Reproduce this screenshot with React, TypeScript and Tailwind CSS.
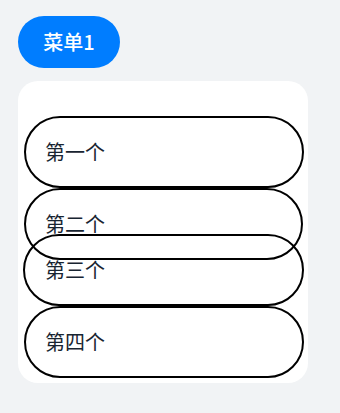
import React from "react";

const items = ["第一个", "第二个", "第三个", "第四个"];

export default function App() {
  return (
    <div
      className="w-[340px] h-[413px] bg-[#f1f3f5] overflow-hidden"
      style={{ fontFamily: '"Noto Sans CJK SC", "Noto Sans", sans-serif' }}
    >
      <div className="pt-[16px] pl-[18px]">
        <div className="w-[102px] h-[52px] rounded-full bg-[#007dff] text-white text-[20px] font-medium flex items-center justify-center">
          菜单1
        </div>
      </div>
      <div className="mt-[13px] ml-[18px] w-[290px] bg-white rounded-[20px] pt-[35px] pb-[5px] pl-[6px] flex flex-col">
        <div className="w-[280px] h-[72px] border-2 border-black rounded-full flex items-center pl-[19px] text-[20px] text-[#182431]">
          {items[0]}
        </div>
        <div className="w-[279px] h-[72px] border-2 border-black rounded-full flex items-center pl-[19px] text-[20px] text-[#182431]">
          {items[1]}
        </div>
        <div className="-mt-[26px] w-[281px] -ml-[1px] h-[72px] border-2 border-black rounded-full flex items-center pl-[20px] text-[20px] text-[#182431]">
          {items[2]}
        </div>
        <div className="w-[280px] h-[72px] border-2 border-black rounded-full flex items-center pl-[19px] text-[20px] text-[#182431]">
          {items[3]}
        </div>
      </div>
    </div>
  );
}
